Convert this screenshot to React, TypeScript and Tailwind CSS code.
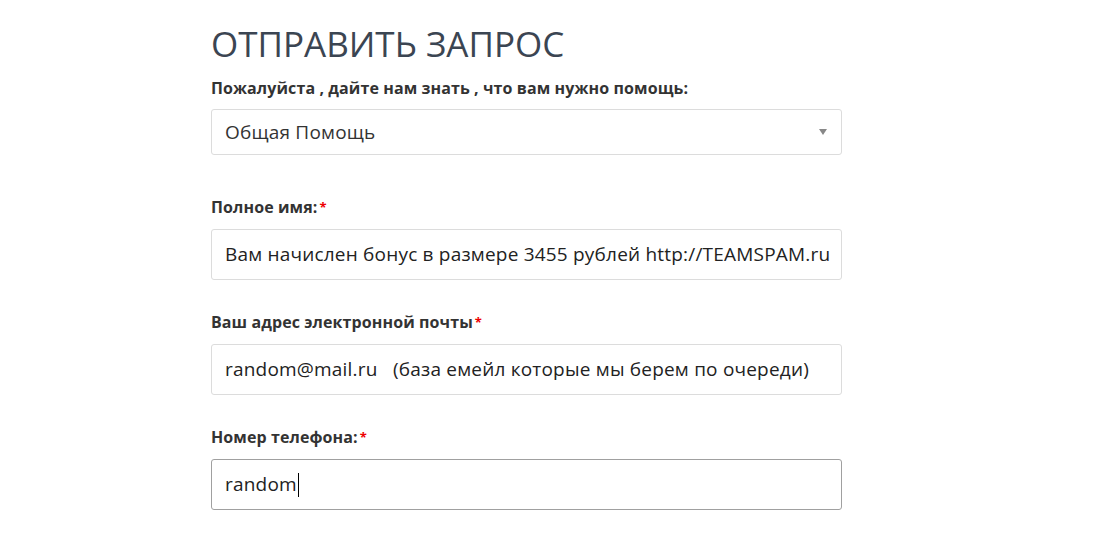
const labelCls =
  "block text-[16px] font-bold leading-[20px] text-[#333] tracking-[0.1px]";

function Star() {
  return <span className="ml-[2px] text-[#e00] text-[13px] align-top">*</span>;
}

function Field({
  label,
  value,
  focused,
  required,
}: {
  label: string;
  value: string;
  focused?: boolean;
  required?: boolean;
}) {
  return (
    <div className="flex flex-col">
      <label className={labelCls}>
        {label}
        {required && <Star />}
      </label>
      <div
        className={
          "mt-[12px] flex h-[51px] items-center rounded-[3px] border bg-white px-[13px] text-[19px] tracking-[0.2px] text-[#222] " +
          (focused ? "border-[#a0a0a0]" : "border-[#dcdcdc]")
        }
      >
        <span className="whitespace-pre">{value}</span>
        {focused && <span className="ml-[1px] h-[24px] w-[1px] bg-black" />}
      </div>
    </div>
  );
}

export default function App() {
  return (
    <div className="min-h-[541px] w-full bg-white font-['Open_Sans',sans-serif]">
      <div className="ml-[211px] w-[631px] pt-[22px]">
        <h1 className="text-[35px] leading-[44px] font-normal text-[#3b4552]">
          ОТПРАВИТЬ ЗАПРОС
        </h1>
        <p className={labelCls + " mt-[12px]"}>
          Пожалуйста , дайте нам знать , что вам нужно помощь:
        </p>
        <div className="mt-[11px] flex h-[46px] items-center justify-between rounded-[3px] border border-[#dcdcdc] bg-white pl-[13px] pr-[14px] text-[19px] tracking-[0.2px] text-[#333]">
          <span>Общая Помощь</span>
          <svg width="8" height="6" viewBox="0 0 8 6">
            <path d="M0 0h8L4 6z" fill="#888" />
          </svg>
        </div>
        <div className="mt-[42px] flex flex-col gap-[32px]">
          <Field
            label="Полное имя:"
            required
            value="Вам начислен бонус в размере 3455 рублей http://TEAMSPAM.ru"
          />
          <Field
            label="Ваш адрес электронной почты"
            required
            value="random@mail.ru   (база емейл которые мы берем по очереди)"
          />
          <Field label="Номер телефона:" required value="random" focused />
        </div>
      </div>
    </div>
  );
}
